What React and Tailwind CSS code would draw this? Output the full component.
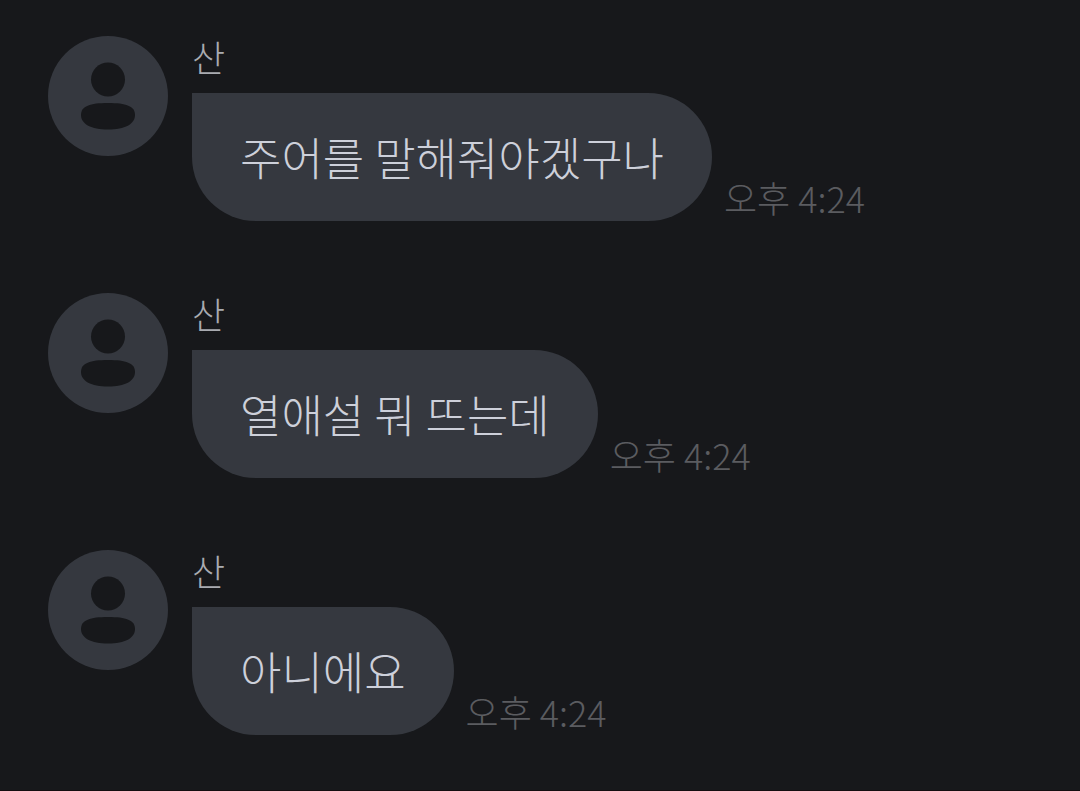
import React from 'react';

const messages = [
  { id: 1, name: '산', text: '주어를 말해줘야겠구나', time: '오후 4:24' },
  { id: 2, name: '산', text: '열애설 뭐 뜨는데', time: '오후 4:24' },
  { id: 3, name: '산', text: '아니에요', time: '오후 4:24' },
];

const Avatar = () => (
  <svg className="size-30 shrink-0" viewBox="0 0 120 120" aria-hidden="true">
    <circle cx="60" cy="60" r="60" fill="#35383f" />
    <circle cx="60" cy="43.5" r="17" fill="#17181b" />
    <path d="M60 67C78 67 87 70 87 79C87 88 77 93.5 60 93.5C43 93.5 33 88 33 79C33 70 42 67 60 67Z" fill="#17181b" />
  </svg>
);

const Message = ({ name, text, time }) => (
  <li className="flex items-start gap-6">
    <Avatar />
    <div className="min-w-0">
      <p className="pb-4 text-4xl/10 text-[#a9abb1]">{name}</p>
      <div className="mt-px flex items-end gap-3">
        <p className="rounded-r-[64px] rounded-bl-[64px] bg-[#35383f] px-12 py-8 text-[45px]/[64px] text-[#cdd0da]">
          {text}
        </p>
        <time className="shrink-0 pb-1 text-4xl/10 text-[#5b5c60]">{time}</time>
      </div>
    </div>
  </li>
);

const App = () => (
  <main className="min-h-screen border-b border-[#140d10] bg-[#17181b] px-12 pt-9 pb-12 font-['Noto_Sans_CJK_KR',sans-serif] font-light">
    <ul className="flex flex-col gap-[72px]">
      {messages.map((message) => (
        <Message key={message.id} name={message.name} text={message.text} time={message.time} />
      ))}
    </ul>
  </main>
);

export default App;
